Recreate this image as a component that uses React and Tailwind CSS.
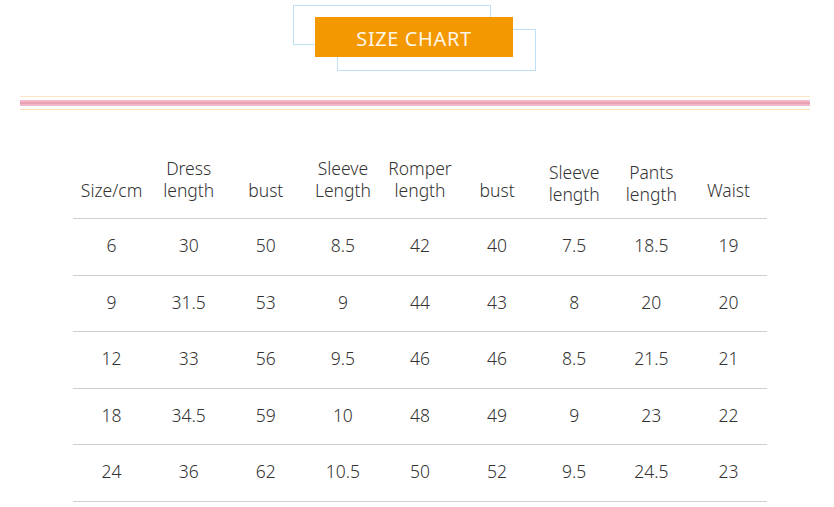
import React from 'react';

const headers = [
    ['', 'Size/cm'],
    ['Dress', 'length'],
    ['', 'bust'],
    ['Sleeve', 'Length'],
    ['Romper', 'length'],
    ['', 'bust'],
    ['Sleeve', 'length'],
    ['Pants', 'length'],
    ['', 'Waist'],
];

const rows = [
    ['6', '30', '50', '8.5', '42', '40', '7.5', '18.5', '19'],
    ['9', '31.5', '53', '9', '44', '43', '8', '20', '20'],
    ['12', '33', '56', '9.5', '46', '46', '8.5', '21.5', '21'],
    ['18', '34.5', '59', '10', '48', '49', '9', '23', '22'],
    ['24', '36', '62', '10.5', '50', '52', '9.5', '24.5', '23'],
];

export default function App() {
    return (
        <div className="w-[834px] h-[507px] bg-white overflow-hidden text-[#333] font-[350]" style={{ fontFamily: '"Noto Sans", "Open Sans", sans-serif' }}>
            {/* Title badge */}
            <div className="relative ml-[293px] mt-[5px] w-[243px] h-[66px]">
                <div className="absolute left-0 top-0 w-[198px] h-[40px] border border-[#bfe0f5]"></div>
                <div className="absolute left-[44px] top-[24px] w-[199px] h-[42px] border border-[#bfe0f5]"></div>
                <div className="absolute left-[22px] top-[12px] w-[198px] h-[40px] bg-[#f39800] flex items-center justify-center pt-[4px] text-[20px] font-normal text-[#fff6e6] tracking-[0.6px]">
                    SIZE CHART
                </div>
            </div>

            {/* Decorative stripes */}
            <div className="mx-[20px] mt-[25px] w-[790px]">
                <div className="h-px bg-[#fbe6c2]"></div>
                <div className="mt-[3px] h-[6px] bg-[#f0b8c8] flex flex-col justify-center">
                    <div className="h-[2px] bg-[#e8a0b4]"></div>
                </div>
                <div className="mt-[3px] h-px bg-[#fbe0b4]"></div>
            </div>

            {/* Table */}
            <div className="ml-[73px] mt-[41px] w-[694px]">
                <div className="grid grid-cols-9 h-[68px] border-b border-[#cfcfcf]">
                    {headers.map((h, i) => (
                        <div key={i} className={`flex flex-col items-center justify-end text-[17.5px] leading-[22px] ${i === 6 || i === 7 ? 'pb-[13px]' : 'pb-[17px]'}`}>
                            {h[0] && <span>{h[0]}</span>}
                            <span>{h[1]}</span>
                        </div>
                    ))}
                </div>
                {rows.map((r, ri) => (
                    <div key={ri} className="grid grid-cols-9 h-[56.5px] border-b border-[#cfcfcf]">
                        {r.map((c, ci) => (
                            <div key={ci} className="flex items-center justify-center text-[17.5px] pb-[3px]">{c}</div>
                        ))}
                    </div>
                ))}
            </div>
        </div>
    );
}
